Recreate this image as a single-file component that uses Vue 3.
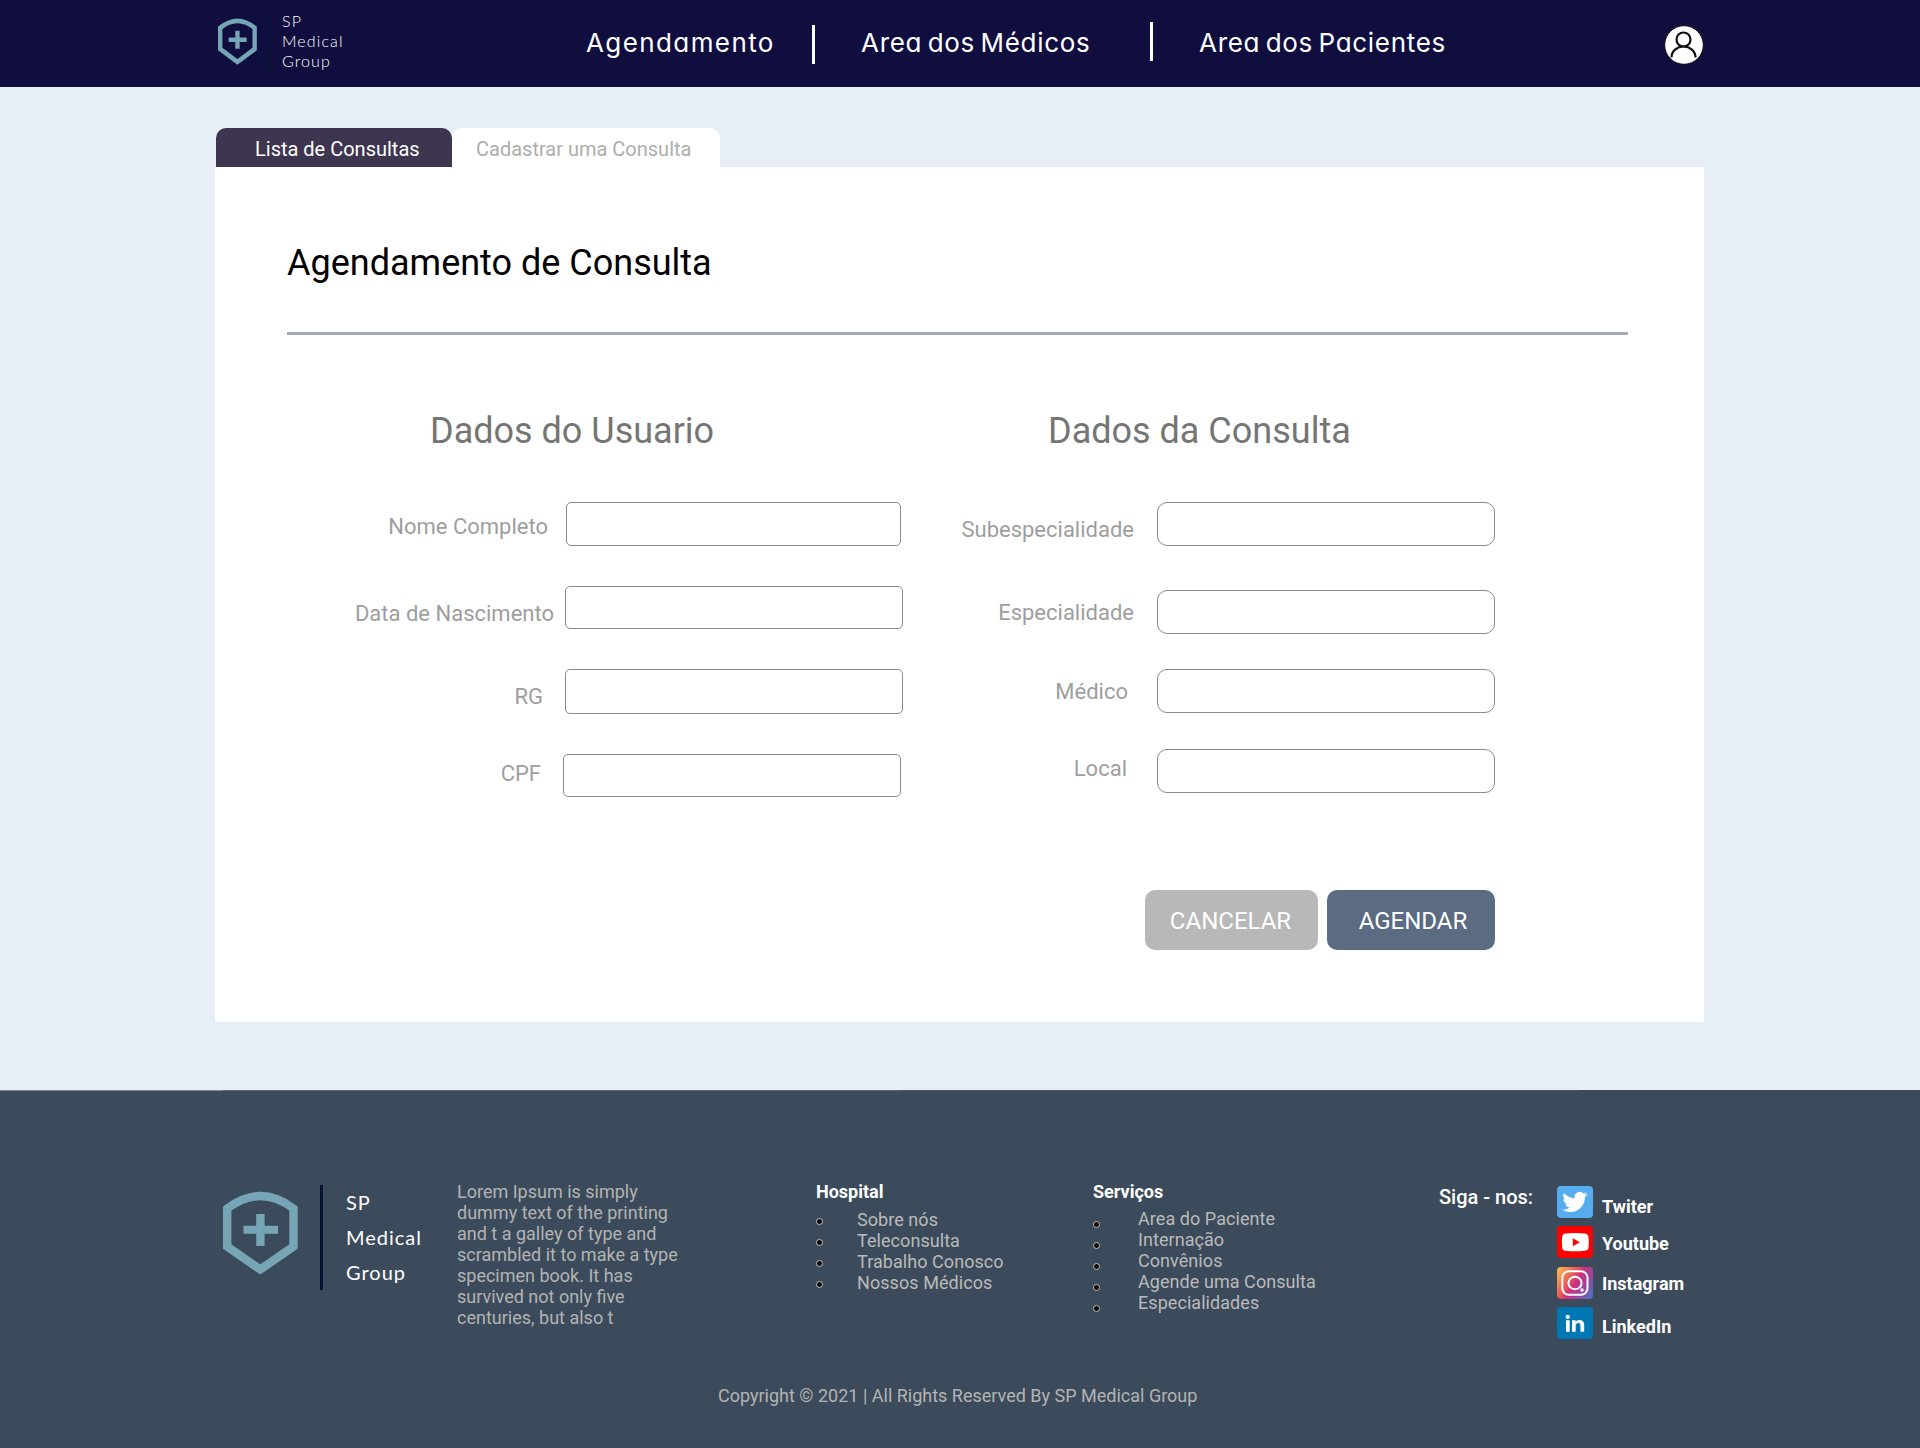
<script setup>
const userFields = [
  { id: 'nome', label: 'Nome Completo' },
  { id: 'nascimento', label: 'Data de Nascimento' },
  { id: 'rg', label: 'RG' },
  { id: 'cpf', label: 'CPF' }
]
const visitFields = [
  { id: 'subespecialidade', label: 'Subespecialidade' },
  { id: 'especialidade', label: 'Especialidade' },
  { id: 'medico', label: 'Médico' },
  { id: 'local', label: 'Local' }
]
const hospital = ['Sobre nós', 'Teleconsulta', 'Trabalho Conosco', 'Nossos Médicos']
const services = ['Area do Paciente', 'Internação', 'Convênios', 'Agende uma Consulta', 'Especialidades']
const about = [
  'Lorem Ipsum is simply',
  'dummy text of the printing',
  'and t a galley of type and',
  'scrambled it to make a type',
  'specimen book. It has',
  'survived not only five',
  'centuries, but also t'
]
</script>

<template>
  <div class="page">
    <header class="top">
      <div class="brand">
        <svg class="shield" viewBox="0 0 75 84" preserveAspectRatio="none">
          <path d="M4.2 17.5Q37.5-7.500 70.500 17.500V55.500L37.300 78.500L4.200 55.500Z" fill="none" stroke="#76a5b5" stroke-width="8.4" />
          <path d="M33.200 23h8.400v11.700H55v8H41.600V55h-8.400V42.700H20.500v-8h12.700z" fill="#76a5b5" />
        </svg>
        <i class="brand-line"></i>
        <div class="brand-name"><span>SP</span><span>Medical</span><span>Group</span></div>
      </div>
      <nav class="nav">
        <a class="n1">Agendamento</a>
        <i class="sep s1"></i>
        <a class="n2">Area dos Médicos</a>
        <i class="sep s2"></i>
        <a class="n3">Area dos Pacientes</a>
      </nav>
      <svg class="user" viewBox="0 0 40 40">
        <circle cx="20" cy="20" r="19.300" fill="#fff" stroke="#111" stroke-width="1" />
        <circle cx="19.500" cy="14.500" r="7" fill="none" stroke="#111" stroke-width="2.200" />
        <path d="M7.500 32.500C7.500 26 13 21.500 19.500 21.500S31.500 26 31.500 32.500" fill="none" stroke="#111" stroke-width="2.200" />
      </svg>
    </header>

    <main class="main">
      <div class="tabs">
        <a class="tab active">Lista de Consultas</a>
        <a class="tab idle">Cadastrar uma Consulta</a>
      </div>
      <section class="card">
        <h1>Agendamento de Consulta</h1>
        <hr />
        <form class="form" @submit.prevent>
          <div class="col user-col">
            <h2>Dados do Usuario</h2>
            <div v-for="f in userFields" :key="f.id" class="field" :class="f.id">
              <label :for="f.id">{{ f.label }}</label>
              <input :id="f.id" type="text" />
            </div>
          </div>
          <div class="col visit-col">
            <h2>Dados da Consulta</h2>
            <div v-for="f in visitFields" :key="f.id" class="field" :class="f.id">
              <label :for="f.id">{{ f.label }}</label>
              <input :id="f.id" type="text" />
            </div>
          </div>
        </form>
        <div class="actions">
          <button type="button" class="cancel">CANCELAR</button>
          <button type="button" class="book">AGENDAR</button>
        </div>
      </section>
    </main>

    <footer class="footer">
      <div class="foot-row">
        <div class="brand foot-brand">
          <svg class="shield" viewBox="0 0 75 84" preserveAspectRatio="none">
            <path d="M4.2 17.5Q37.5-7.500 70.500 17.500V55.500L37.300 78.500L4.200 55.500Z" fill="none" stroke="#76a5b5" stroke-width="8.4" />
            <path d="M33.200 23h8.400v11.700H55v8H41.600V55h-8.400V42.700H20.500v-8h12.700z" fill="#76a5b5" />
          </svg>
          <i class="brand-line"></i>
          <div class="brand-name"><span>SP</span><span>Medical</span><span>Group</span></div>
        </div>
        <p class="about"><span v-for="line in about" :key="line">{{ line }}</span></p>
        <div class="links hospital">
          <h3>Hospital</h3>
          <ul>
            <li v-for="l in hospital" :key="l"><i class="dot"></i>{{ l }}</li>
          </ul>
        </div>
        <div class="links services">
          <h3>Serviços</h3>
          <ul>
            <li v-for="l in services" :key="l"><i class="dot"></i>{{ l }}</li>
          </ul>
        </div>
        <div class="follow">Siga - nos:</div>
        <ul class="social">
          <li class="tw">
            <svg viewBox="0 0 36 32">
              <rect width="36" height="32" rx="4" fill="#55acee" />
              <path transform="translate(5.300 3.700) scale(1.050 1.020)" fill="#fff" d="M23.950 4.570a10 10 0 0 1-2.820.770 4.960 4.960 0 0 0 2.160-2.720c-.950.550-2 .950-3.130 1.180a4.920 4.920 0 0 0-8.380 4.480C7.690 8.090 4.070 6.130 1.640 3.160a4.820 4.820 0 0 0-.670 2.480c0 1.710.870 3.210 2.190 4.100a4.900 4.900 0 0 1-2.230-.620v.060a4.920 4.920 0 0 0 3.950 4.830 5 5 0 0 1-2.210.080 4.940 4.940 0 0 0 4.600 3.420A9.870 9.870 0 0 1 0 19.540a13.990 13.990 0 0 0 7.550 2.210c9.050 0 14-7.500 14-13.980 0-.210 0-.420-.020-.630a9.940 9.940 0 0 0 2.460-2.550z" />
            </svg>
            <span>Twiter</span>
          </li>
          <li class="yt">
            <svg viewBox="0 0 36 32">
              <rect width="36" height="32" rx="4" fill="#f00" />
              <path d="M8.500 7.500Q18 6.500 27.500 7.500 31 7.500 31.500 11 32.200 16 31.500 21.500 31 24.700 27.500 24.800 18 25.800 8.500 24.800 5.500 24.700 5.200 21.500 4.500 16 5.200 11 5.500 7.500 8.500 7.500Z" fill="#fff" />
              <path d="M15.800 12.200v8l7-4z" fill="#f00" />
            </svg>
            <span>Youtube</span>
          </li>
          <li class="ig">
            <svg viewBox="0 0 36 32">
              <defs>
                <linearGradient id="igBase" x1="0" y1=".2" x2="1" y2=".75">
                  <stop offset="0" stop-color="#fbb055" />
                  <stop offset=".28" stop-color="#ee6a50" />
                  <stop offset=".52" stop-color="#cf2f7c" />
                  <stop offset=".75" stop-color="#9b44a0" />
                  <stop offset="1" stop-color="#5b69c0" />
                </linearGradient>
              </defs>
              <rect width="36" height="32" rx="4" fill="url(#igBase)" />
              <g fill="none" stroke="#fff" stroke-width="2">
                <rect x="5.300" y="4.200" width="25.200" height="23.600" rx="6.500" />
                <ellipse cx="18" cy="16" rx="6.600" ry="6.200" />
              </g>
              <circle cx="25" cy="23" r="1.700" fill="#fff" />
            </svg>
            <span>Instagram</span>
          </li>
          <li class="in">
            <svg viewBox="0 0 36 32">
              <rect width="36" height="32" rx="4" fill="#0077b5" />
              <circle cx="10.800" cy="9.900" r="2.100" fill="#fff" />
              <path d="M9 13.200h3.700v11.600H9zM15 13.200h3.500v1.600c.6-1 1.900-1.900 3.900-1.900 4 0 4.800 2.500 4.800 5.700v6.200h-3.700v-5.600c0-1.500-.1-3.100-2.200-3.100s-2.600 1.400-2.600 3v5.700H15z" fill="#fff" />
            </svg>
            <span>LinkedIn</span>
          </li>
        </ul>
      </div>
      <p class="copy">Copyright © 2021 | All Rights Reserved By SP Medical Group</p>
    </footer>
  </div>
</template>

<style>
body { margin: 0; }
</style>

<style scoped>
.page {
  display: flex;
  flex-direction: column;
  width: 1920px;
  height: 1448px;
  overflow: hidden;
  background: #e7eef6;
  font-family: Roboto, "Liberation Sans", sans-serif;
}
.page * { box-sizing: border-box; }
h1, h2, h3, p, ul { margin: 0; padding: 0; font-weight: 400; }
ul { list-style: none; }
i { display: block; flex: none; }
svg { display: block; flex: none; }

/* header */
.top { display: flex; align-items: flex-start; height: 87px; background: #100d3f; }
.brand { display: flex; align-items: flex-start; width: 368px; margin-left: 218px; }
.shield { width: 39px; height: 47px; margin-top: 18px; }
.brand-line { width: 2px; height: 59px; margin: 15px 0 0 12px; background: #04132f; }
.brand-name {
  display: flex;
  flex-direction: column;
  margin: 11px 0 0 11px;
  color: #fff;
  font: 300 16px/20px Lato, sans-serif;
  letter-spacing: 1.100px;
}
.nav {
  display: flex;
  align-items: flex-start;
  color: #fff;
  font: 400 26px/32px Inter, sans-serif;
  font-feature-settings: "cv11";
  white-space: nowrap;
}
.nav a { margin-top: 27px; letter-spacing: .700px; word-spacing: -2.500px; }
.nav .n1 { width: 226px; letter-spacing: 1.400px; }
.sep { width: 3px; height: 39px; background: #fff; }
.s1 { margin-top: 25px; }
.n2 { width: 335px; padding-left: 46px; }
.s2 { margin-top: 22px; }
.n3 { width: 350px; padding-left: 46px; }
.user { width: 40px; height: 40px; margin: 25px 216px 0 auto; }

/* card */
.main { height: 1003px; padding: 41px 216px 0 215px; }
.tabs { display: flex; height: 39px; padding-left: 1px; }
.tab { border-radius: 10px 10px 0 0; font-size: 20px; line-height: 43px; white-space: nowrap; }
.active { width: 236px; padding-left: 39px; background: #3e3550; color: #fff; }
.idle { width: 268px; padding-left: 24px; background: #fff; color: #adadad; }
.card { height: 855px; background: #fff; }
h1 { padding: 74px 0 0 72px; color: #000; font-size: 36px; line-height: 44px; }
hr { height: 3px; margin: 47px 76px 0 72px; border: 0; background: #a3abb7; }
.form { display: flex; height: 555px; }
.col { display: flex; flex-direction: column; flex: none; }
.user-col { width: 690px; }
.visit-col { width: 592px; }
h2 { height: 167px; padding-top: 74px; color: #757575; font-size: 36px; line-height: 44px; }
.user-col h2 { padding-left: 215px; }
.visit-col h2 { padding-left: 143px; }
.field { display: flex; align-items: flex-start; }
label { color: #9e9e9e; font-size: 22px; line-height: 26px; text-align: right; white-space: nowrap; }
input { border: 1px solid #8a8a8a; background: #fff; outline: 0; padding: 0 12px; font: 20px Roboto, sans-serif; }
.user-col label { width: 350px; }
.user-col input { width: 338px; height: 43px; border-radius: 5px; }
.visit-col label { width: 252px; }
.visit-col input { width: 338px; height: 44px; border-radius: 10px; }

.nome { height: 84px; }
.user-col .nome label { width: 351px; padding: 12px 18px 0 0; }
.user-col .nome input { width: 335px; height: 44px; }
.nascimento { height: 83px; }
.nascimento label { padding: 15px 11px 0 0; }
.rg { height: 85px; }
.rg label { padding: 15px 22px 0 0; }
.user-col .rg input { height: 45px; }
.cpf label { padding: 7px 22px 0 0; }
.user-col .cpf label { width: 348px; }

.subespecialidade { height: 88px; }
.subespecialidade label { padding: 15px 23px 0 0; }
.especialidade { height: 79px; }
.especialidade label { padding: 10px 23px 0 0; }
.medico { height: 80px; }
.medico label { padding: 10px 29px 0 0; }
.local label { padding: 7px 30px 0 0; }

.actions { display: flex; gap: 9px; margin-left: 930px; }
button { height: 60px; padding: 2px 0 0; border: 0; border-radius: 10px; color: #fff; font: 24px Roboto, sans-serif; }
.cancel { width: 173px; padding-right: 2px; background: #b8b8b8; }
.book { width: 168px; padding-left: 4px; background: #5a6b82; }

/* footer */
.footer {
  height: 358px;
  background: linear-gradient(90deg, #7c8996 0 223px, #586675 223px 900px, #4a5868 900px 1580px, #3c4b5b 1580px) 0 0 / 100% 1px no-repeat #3c4b5b;
}
.foot-row { display: flex; align-items: flex-start; height: 294px; padding-left: 223px; }
.foot-brand { width: 234px; margin-left: 0; }
.foot-brand .shield { width: 75px; height: 84px; margin-top: 101px; }
.foot-brand .brand-line { width: 3px; height: 105px; margin: 95px 0 0 22px; }
.foot-brand .brand-name { margin: 95px 0 0 23px; font-size: 20px; line-height: 34.800px; font-weight: 400; letter-spacing: 1px; }
.about { display: flex; flex-direction: column; width: 359px; margin-top: 91px; color: #b3b3b3; font-size: 18px; line-height: 21px; }
.about span { white-space: nowrap; }
.links { color: #bababa; font-size: 18px; font-weight: 500; line-height: 21px; white-space: nowrap; }
.links h3 { color: #fff; font-size: 18px; font-weight: 700; line-height: 21px; margin-top: 91px; }
.links li { display: flex; align-items: center; letter-spacing: .060px; }
.hospital { width: 277px; }
.hospital ul { margin-top: 7px; }
.services { width: 346px; }
.services ul { margin-top: 6px; }
.dot { width: 7px; height: 7px; border: 1px solid #c4c4c4; border-radius: 50%; background: #000; }
.hospital .dot { margin: 3px 34px 0 0; }
.services .dot { margin: 11px 38px 0 0; }
.follow { width: 118px; margin-top: 95px; color: #fff; font-size: 20px; font-weight: 500; line-height: 24px; white-space: nowrap; }
.social { display: flex; flex-direction: column; gap: 8.300px; margin-top: 96px; color: #fff; font-size: 18px; font-weight: 700; line-height: 22px; }
.social li { display: flex; align-items: flex-start; gap: 9px; height: 32px; }
.social svg { width: 36px; height: 32px; }
.tw span { margin-top: 10px; }
.yt span { margin-top: 7px; }
.ig span { margin-top: 6px; }
.in span { margin-top: 9px; }
.copy { padding-left: 718px; color: #b3b3b3; font-size: 18px; line-height: 24px; }
</style>
